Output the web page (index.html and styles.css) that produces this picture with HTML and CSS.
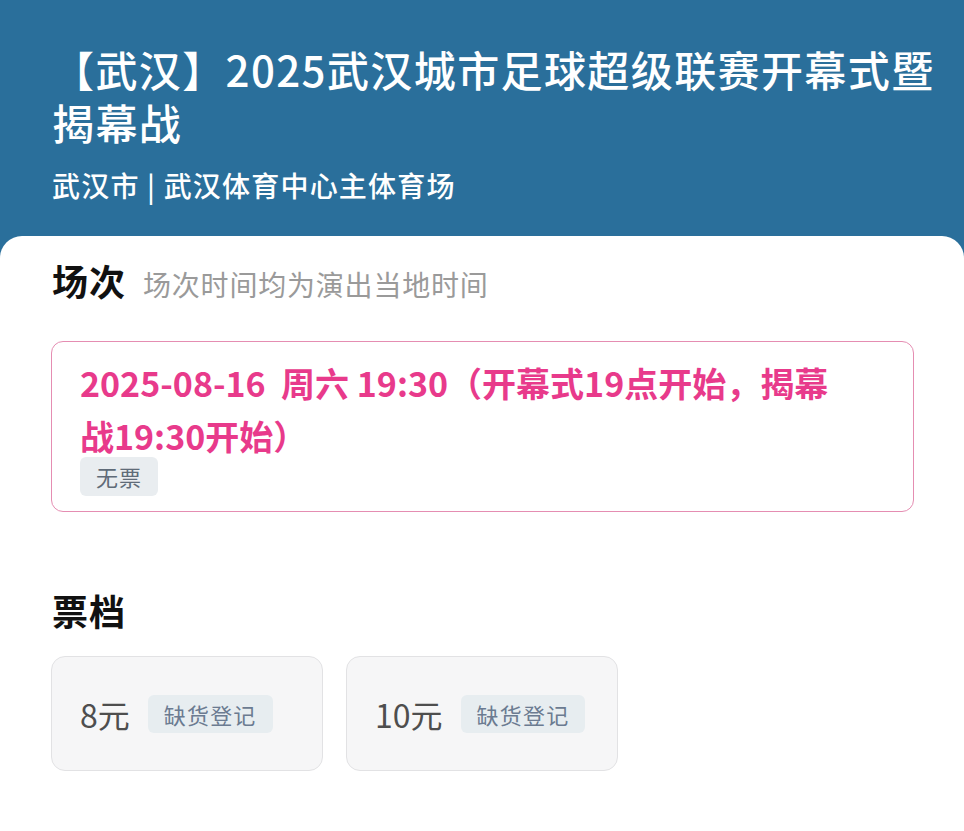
FILE: index.html
```html
<!DOCTYPE html>
<html lang="zh-CN">

<head>
    <meta charset="UTF-8">
    <meta name="viewport" content="width=device-width, initial-scale=1.0">
    <title>2025武汉城市足球超级联赛开幕式暨揭幕战</title>
    <link rel="stylesheet" href="styles.css">
</head>

<body>
    <div class="page">
        <header class="show-header">
            <h1 class="show-title">【武汉】2025武汉城市足球超级联赛开幕式暨揭幕战</h1>
            <div class="show-venue">武汉市 | 武汉体育中心主体育场</div>
        </header>

        <main class="sheet">
            <section class="block">
                <div class="block-head">
                    <h2 class="block-title">场次</h2>
                    <span class="block-note">场次时间均为演出当地时间</span>
                </div>

                <div class="session selected">
                    <div class="session-time">2025-08-16&nbsp; 周六 19:30（开幕式19点开始，揭幕战19:30开始）</div>
                    <span class="tag">无票</span>
                </div>
            </section>

            <section class="block tickets-block">
                <div class="block-head">
                    <h2 class="block-title">票档</h2>
                </div>

                <div class="tickets">
                    <div class="ticket">
                        <span class="price">8元</span>
                        <span class="tag tag-wait">缺货登记</span>
                    </div>
                    <div class="ticket">
                        <span class="price">10元</span>
                        <span class="tag tag-wait">缺货登记</span>
                    </div>
                </div>
            </section>
        </main>
    </div>
</body>

</html>
```

FILE: styles.css
```css
html,
body {
    margin: 0;
    padding: 0;
    background-color: #ffffff;
}

body {
    font-family: "Noto Sans CJK SC", "Noto Sans", sans-serif;
}

.page {
    background-color: #2a6f9b;
    min-height: 831px;
    display: flex;
    flex-direction: column;
}

.show-header {
    padding: 42px 8px 31px 52px;
    color: #ffffff;
}

.show-title {
    margin: 0;
    font-size: 42px;
    line-height: 53px;
    font-weight: 500;
    letter-spacing: 1.4px;
}

.show-venue {
    margin-top: 17px;
    font-size: 28px;
    line-height: 40px;
    font-weight: 500;
    letter-spacing: 1.2px;
}

.sheet {
    flex: 1;
    background-color: #ffffff;
    border-radius: 22px 22px 0 0;
    padding: 20px 50px 40px 51px;
}

.block-head {
    display: flex;
    align-items: baseline;
    gap: 17px;
    padding-left: 1px;
}

.block-title {
    margin: 0;
    font-size: 36px;
    line-height: 48px;
    font-weight: 700;
    color: #111111;
    letter-spacing: 1px;
}

.block-note {
    font-size: 28px;
    color: #9a9a9a;
    letter-spacing: 0.8px;
}

.session {
    margin-top: 37px;
    border: 1px solid #e58db2;
    border-radius: 12px;
    padding: 14px 64px 15px 28px;
}

.session-time {
    font-size: 34px;
    line-height: 53px;
    font-weight: 700;
    color: #e83a8b;
}

.tag {
    display: inline-block;
    margin-top: -5px;
    padding: 0 16px;
    height: 39px;
    line-height: 39px;
    font-size: 22px;
    letter-spacing: 1px;
    color: #5f6b78;
    background-color: #e9edf0;
    border-radius: 6px;
}

.tickets-block {
    margin-top: 74px;
}

.tickets {
    display: flex;
    gap: 23px;
    margin-top: 22px;
}

.ticket {
    display: flex;
    align-items: center;
    gap: 18px;
    padding-left: 28px;
    box-sizing: border-box;
    width: 272px;
    height: 115px;
    background-color: #f6f6f7;
    border: 1px solid #e2e2e4;
    border-radius: 14px;
}

.price {
    font-size: 32px;
    color: #4e4e4e;
}

.tag-wait {
    margin-top: 0;
    height: 38px;
    line-height: 38px;
    padding: 0 16px;
    font-size: 22px;
    letter-spacing: 1.2px;
    color: #6b7b91;
    background-color: #e7edf0;
}
```
